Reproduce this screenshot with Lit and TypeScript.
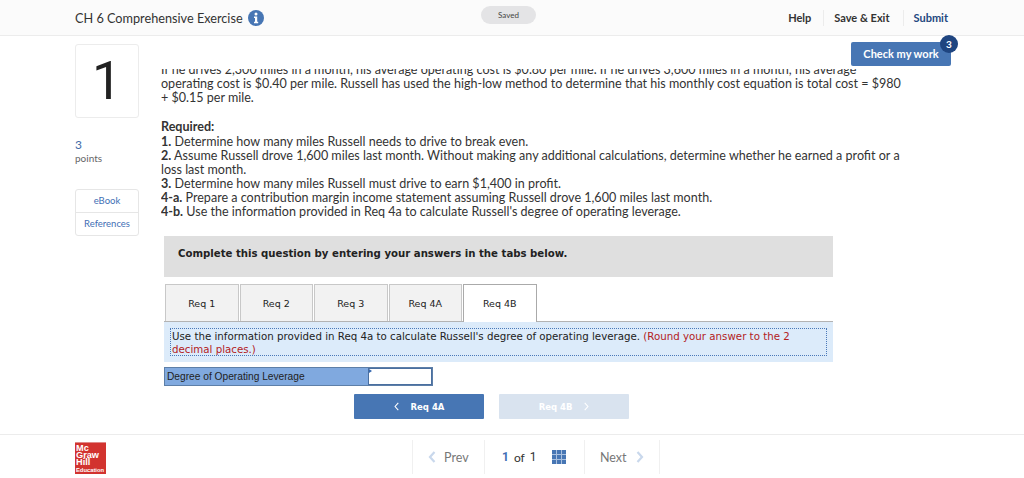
import {LitElement, html, svg, css} from 'lit';
import {customElement} from 'lit/decorators.js';

const chevron = (dir: 'left' | 'right', color: string, w = 8, h = 12, sw = 2.2) => html`
  <svg width="${w}" height="${h}" viewBox="0 0 7 12" fill="none" stroke="${color}" stroke-width="${sw}">
    <path d="${dir === 'left' ? 'M6 1 L1.5 6 L6 11' : 'M1 1 L5.5 6 L1 11'}"></path>
  </svg>`;

@customElement('app-root')
class AppRoot extends LitElement {
  static styles = css`
    :host {
      display: block;
      width: 1024px;
      height: 478px;
      overflow: hidden;
      background: #fff;
      color: #2a2a2a;
      font-family: Lato, "Open Sans", sans-serif;
    }

    .header {
      height: 35px;
      border-bottom: 1px solid #ececec;
      background: #fbfbfb;
      display: grid;
      grid-template-columns: 1fr auto 1fr;
      align-items: center;
      padding: 0 76px 0 75px;
    }
    .title {
      display: flex;
      align-items: center;
      gap: 5px;
      font-size: 12.7px;
      color: #333;
    }
    .saved {
      width: 55px;
      height: 18px;
      margin: -6px 0 0 -6px;
      border-radius: 9px;
      background: #e4e4e6;
      font-size: 8px;
      line-height: 18px;
      text-align: center;
      color: #444;
    }
    .header-links {
      display: flex;
      justify-content: flex-end;
      align-items: center;
      font-size: 11px;
      font-weight: 700;
      color: #333;
    }
    .header-links span {
      padding: 0 13px 0 10px;
      line-height: 16px;
      border-right: 1px solid #ececec;
    }
    .header-links span:first-child {
      padding-right: 12px;
    }
    .header-links span:last-child {
      border-right: 0;
      padding-right: 0;
      padding-left: 10px;
      color: #24477f;
    }

    .body {
      height: 398px;
      display: flex;
      padding-left: 75px;
    }
    .side {
      width: 64px;
      flex: none;
      padding-top: 8px;
      margin-right: 22px;
    }
    .number {
      height: 72px;
      border: 1px solid #ececec;
      border-radius: 3px;
      font-family: Roboto, sans-serif;
      font-size: 53px;
      font-weight: 400;
      line-height: 72px;
      text-align: center;
      color: #222;
    }
    .points-value {
      margin-top: 20px;
      font-size: 12px;
      line-height: 14px;
      color: #3f6aa8;
    }
    .points-label {
      font-size: 10px;
      line-height: 13px;
      color: #666;
    }
    .side-links {
      margin-top: 24px;
      border: 1px solid #e6e6e6;
      border-radius: 3px;
      font-size: 9.5px;
      text-align: center;
      color: #3f6fb5;
    }
    .side-links div {
      height: 22px;
      line-height: 22px;
    }
    .side-links div + div {
      border-top: 1px solid #e6e6e6;
    }

    .main {
      width: 790px;
      flex: none;
    }
    .toolbar {
      height: 33px;
      box-sizing: border-box;
      padding-top: 6px;
      display: flex;
      justify-content: flex-end;
      align-items: flex-start;
    }
    .check {
      position: relative;
      width: 100px;
      height: 24px;
      border-radius: 2px;
      background: #4776b4;
      color: #fff;
      font-size: 11px;
      font-weight: 700;
      line-height: 24px;
      text-align: center;
    }
    .badge {
      position: absolute;
      right: -7px;
      top: -7px;
      width: 18px;
      height: 18px;
      border-radius: 50%;
      background: #1f4580;
      font-size: 10px;
      line-height: 18px;
    }
    .clip {
      height: 152px;
      overflow: hidden;
    }
    .question {
      margin-top: -6px;
      white-space: nowrap;
      font-size: 12.55px;
      line-height: 14.15px;
      color: #333;
    }
    .question p {
      margin: 0 0 15px;
    }

    .work {
      width: 669px;
      margin: 15px 0 0 3px;
      font-family: "DejaVu Sans", Verdana, sans-serif;
      font-size: 10px;
      color: #222;
    }
    .banner {
      height: 41px;
      background: #dfdfdf;
      padding-left: 14px;
      font-size: 10.16px;
      font-weight: 700;
      line-height: 35px;
    }
    .tabs {
      display: flex;
      gap: 1px;
      height: 37px;
      margin-top: 7px;
      padding-left: 1px;
      border-bottom: 1px solid #b3b3b3;
    }
    .tab {
      width: 73.5px;
      height: 37px;
      box-sizing: border-box;
      border: 1px solid #c8c8c8;
      border-bottom: 0;
      background: #f2f2f2;
      line-height: 37px;
      font-size: 9.5px;
      text-align: center;
    }
    .tab.active {
      height: 38px;
      background: #fff;
      border-color: #aaa;
      border-bottom: 0;
      position: relative;
      z-index: 1;
    }
    .prompt {
      height: 40px;
      box-sizing: border-box;
      padding: 6px;
      background: #dcebfa;
    }
    .prompt div {
      height: 28px;
      box-sizing: border-box;
      padding: 1px 0 0 1px;
      border: 1px dotted #4a78b8;
      font-size: 10.25px;
      line-height: 12.5px;
    }
    .prompt em {
      font-style: normal;
      color: #b3211c;
    }
    .answer {
      display: flex;
      width: 269px;
      height: 19px;
      margin-top: 5px;
      box-sizing: border-box;
      border: 1px solid #5d7fa8;
      font-family: "Liberation Sans", Arial, sans-serif;
      font-size: 10.2px;
      line-height: 18px;
    }
    .answer label {
      width: 201px;
      padding-left: 2px;
      background: #80a9df;
      color: #222;
    }
    .answer .cell {
      position: relative;
      flex: 1;
      border: 1px solid #4a6fa0;
      background: #fff;
    }
    .answer .cell::before {
      content: "";
      position: absolute;
      left: 0;
      top: 0;
      border-left: 3px solid #3568b0;
      border-top: 2px solid transparent;
      border-bottom: 2px solid transparent;
    }
    .pager {
      display: flex;
      gap: 15px;
      margin: 8px 0 0 190px;
    }
    .pager div {
      width: 130px;
      height: 25px;
      display: flex;
      justify-content: center;
      align-items: center;
      gap: 12px;
      border-radius: 1px;
      color: #fff;
      font-size: 8.5px;
      font-weight: 700;
      background: #4776b4;
    }
    .pager div.off {
      background: #d9e3ef;
    }

    .footer {
      height: 43px;
      border-top: 1px solid #ececec;
      display: flex;
      padding-left: 75px;
    }
    .logo {
      width: 31px;
      height: 32px;
      margin-top: 7px;
      box-sizing: border-box;
      padding: 2px 0 0 1px;
      background: #d2332f;
      border-top: 1px solid #e08a88;
      color: #fff;
      font-family: "Liberation Sans", Arial, sans-serif;
      font-size: 9.2px;
      font-weight: 700;
      line-height: 7.2px;
    }
    .logo small {
      display: block;
      font-size: 5.8px;
      line-height: 6px;
    }
    .nav {
      display: flex;
      height: 34px;
      margin: 5px 0 0 306px;
      font-size: 12.5px;
      color: #777;
    }
    .nav > div {
      display: flex;
      align-items: center;
      box-sizing: border-box;
      border-left: 1px solid #f0f0f0;
    }
    .prev { width: 72px; padding-left: 15px; gap: 8px; }
    .count { width: 100px; padding-left: 17px; color: #333; font-size: 12px; gap: 5px; }
    .count b { color: #3f6fb5; font-family: Roboto, sans-serif; }
    .count span { font-family: Roboto, sans-serif; }
    .count svg { margin-left: 10px; }
    .next { width: 76px; padding-left: 15px; gap: 9px; border-right: 1px solid #f0f0f0; }
  `;

  renderHeader() {
    return html`
      <div class="header">
        <div class="title">
          CH 6 Comprehensive Exercise
          <svg width="16" height="16" viewBox="0 0 16 16">
            <circle cx="8" cy="8" r="8" fill="#4776b4"></circle>
            <circle cx="8" cy="4" r="1.5" fill="#fff"></circle>
            <path d="M6 6.6h3.2v5.2h1v1.4H6v-1.4h1V8H6z" fill="#fff"></path>
          </svg>
        </div>
        <div class="saved">Saved</div>
        <div class="header-links">
          <span>Help</span><span>Save &amp; Exit</span><span>Submit</span>
        </div>
      </div>`;
  }

  renderSide() {
    return html`
      <div class="side">
        <div class="number">1</div>
        <div class="points-value">3</div>
        <div class="points-label">points</div>
        <div class="side-links">
          <div>eBook</div>
          <div>References</div>
        </div>
      </div>`;
  }

  renderQuestion() {
    return html`
      <div class="clip">
        <div class="question">
          <p>If he drives 2,300 miles in a month, his average operating cost is $0.80 per mile. If he drives 3,600 miles in a month, his average<br>
            operating cost is $0.40 per mile. Russell has used the high-low method to determine that his monthly cost equation is total cost = $980<br>
            + $0.15 per mile.</p>
          <b>Required:</b><br>
          <b>1.</b> Determine how many miles Russell needs to drive to break even.<br>
          <b>2.</b> Assume Russell drove 1,600 miles last month. Without making any additional calculations, determine whether he earned a profit or a<br>
          loss last month.<br>
          <b>3.</b> Determine how many miles Russell must drive to earn $1,400 in profit.<br>
          <b>4-a.</b> Prepare a contribution margin income statement assuming Russell drove 1,600 miles last month.<br>
          <b>4-b.</b> Use the information provided in Req 4a to calculate Russell's degree of operating leverage.
        </div>
      </div>`;
  }

  renderWork() {
    const tabs = ['Req 1', 'Req 2', 'Req 3', 'Req 4A', 'Req 4B'];
    return html`
      <div class="work">
        <div class="banner">Complete this question by entering your answers in the tabs below.</div>
        <div class="tabs">
          ${tabs.map((tab, i) => html`<div class="tab ${i === 4 ? 'active' : ''}">${tab}</div>`)}
        </div>
        <div class="prompt">
          <div>Use the information provided in Req 4a to calculate Russell's degree of operating leverage. <em>(Round your answer to the 2 decimal places.)</em></div>
        </div>
        <div class="answer">
          <label>Degree of Operating Leverage</label>
          <div class="cell"></div>
        </div>
        <div class="pager">
          <div>${chevron('left', '#fff', 5, 9, 1.5)} Req 4A</div>
          <div class="off">Req 4B ${chevron('right', '#fff', 5, 9, 1.5)}</div>
        </div>
      </div>`;
  }

  renderFooter() {
    const squares = [0, 1, 2].flatMap(y => [0, 1, 2].map(x => [x, y]));
    return html`
      <div class="footer">
        <div class="logo">Mc<br>Graw<br>Hill<small>Education</small></div>
        <div class="nav">
          <div class="prev">${chevron('left', '#c9d8ec')} Prev</div>
          <div class="count">
            <b>1</b> of <span>1</span>
            <svg width="14" height="14" viewBox="0 0 14 14">
              <rect width="14" height="14" fill="#a9c0df"></rect>
              ${squares.map(([x, y]) => svg`<rect x="${x * 5}" y="${y * 5}" width="4" height="4" fill="#4776b4"></rect>`)}
            </svg>
          </div>
          <div class="next">Next ${chevron('right', '#c9d8ec')}</div>
        </div>
      </div>`;
  }

  render() {
    return html`
      ${this.renderHeader()}
      <div class="body">
        ${this.renderSide()}
        <div class="main">
          <div class="toolbar">
            <div class="check">Check my work<div class="badge">3</div></div>
          </div>
          ${this.renderQuestion()}
          ${this.renderWork()}
        </div>
      </div>
      ${this.renderFooter()}`;
  }
}
